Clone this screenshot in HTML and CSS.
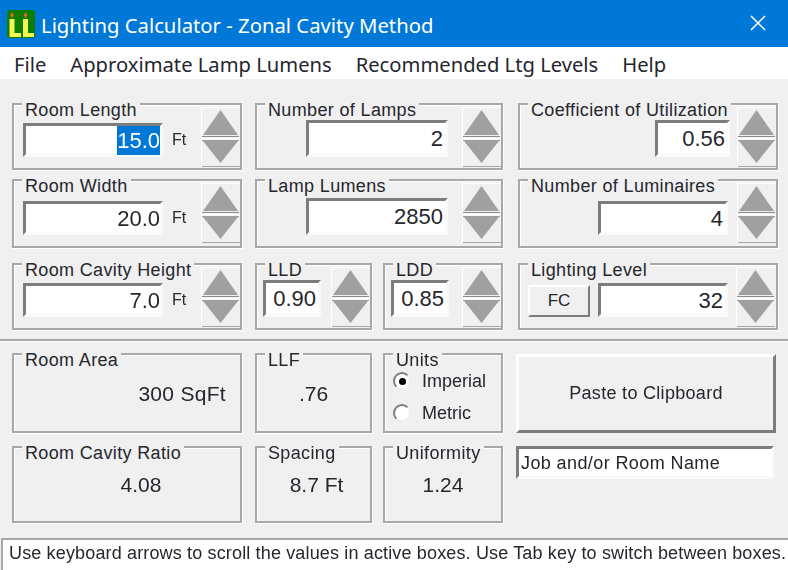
FILE: index.html
```html
<!DOCTYPE html>
<html lang="en">
<head>
  <meta charset="UTF-8">
  <title>Lighting Calculator - Zonal Cavity Method</title>
  <link rel="stylesheet" href="styles.css">
</head>
<body>

<svg class="defs" width="0" height="0">
  <symbol id="spin" viewBox="0 0 39 60">
    <path d="M19.5 3 L37 28 L2 28 Z" fill="#a0a0a0"/>
    <path d="M1 29.5 H38" stroke="#8c8c8c" stroke-width="1"/>
    <path d="M1 31.5 H38" stroke="#fff" stroke-width="1.5"/>
    <path d="M1 33.5 H38" stroke="#a0a0a0" stroke-width="1"/>
    <path d="M2 34 L37 34 L19.5 56 Z" fill="#a0a0a0"/>
  </symbol>
</svg>

<header class="titlebar">
  <svg class="app-icon" width="28" height="28" viewBox="0 0 28 28">
    <rect width="28" height="28" rx="3" fill="#0c7f00"/>
    <path d="M2.5 9 H7.5 V23 H14 V27 H2.5 Z M16 9 H21 V23 H27 V27 H16 Z" fill="#f6f650"/>
    <path d="M5 2 L6.8 5.5 L5 8 L3.2 5.5 Z M18.5 2 L20.3 5.5 L18.5 8 L16.7 5.5 Z" fill="#e8642a"/>
  </svg>
  <span class="app-title">Lighting Calculator - Zonal Cavity Method</span>
  <svg class="close-x" width="16" height="16" viewBox="0 0 16 16">
    <path d="M1 1 L15 15 M15 1 L1 15" stroke="#fff" stroke-width="1.5"/>
  </svg>
</header>

<nav class="menubar">
  <span>File</span>
  <span>Approximate Lamp Lumens</span>
  <span>Recommended Ltg Levels</span>
  <span>Help</span>
</nav>

<main class="panel">
  <section class="inputs">
    <div class="group c1 r1">
      <span class="group-label">Room Length</span>
      <div class="field w-room"><span class="selected">15.0</span></div>
      <span class="unit">Ft</span>
      <svg class="spin"><use href="#spin"/></svg>
    </div>
    <div class="group c2 r1 wide-gap">
      <span class="group-label">Number of Lamps</span>
      <div class="field w-lamps tall">2</div>
      <svg class="spin"><use href="#spin"/></svg>
    </div>
    <div class="group c4 r1 tight-gap">
      <span class="group-label">Coefficient of Utilization</span>
      <div class="field w-cu tall">0.56</div>
      <svg class="spin"><use href="#spin"/></svg>
    </div>

    <div class="group c1 r2">
      <span class="group-label">Room Width</span>
      <div class="field w-room">20.0</div>
      <span class="unit">Ft</span>
      <svg class="spin"><use href="#spin"/></svg>
    </div>
    <div class="group c2 r2 wide-gap">
      <span class="group-label">Lamp Lumens</span>
      <div class="field w-lamps tall">2850</div>
      <svg class="spin"><use href="#spin"/></svg>
    </div>
    <div class="group c4 r2">
      <span class="group-label">Number of Luminaires</span>
      <div class="field w-lum">4</div>
      <svg class="spin"><use href="#spin"/></svg>
    </div>

    <div class="group c1 r3">
      <span class="group-label">Room Cavity Height</span>
      <div class="field w-room">7.0</div>
      <span class="unit">Ft</span>
      <svg class="spin"><use href="#spin"/></svg>
    </div>
    <div class="group c2 r3 start">
      <span class="group-label">LLD</span>
      <div class="field w-factor tall">0.90</div>
      <svg class="spin"><use href="#spin"/></svg>
    </div>
    <div class="group c3 r3 start">
      <span class="group-label">LDD</span>
      <div class="field w-factor tall">0.85</div>
      <svg class="spin"><use href="#spin"/></svg>
    </div>
    <div class="group c4 r3 with-btn">
      <span class="group-label">Lighting Level</span>
      <button class="fc-btn">FC</button>
      <div class="field w-lum">32</div>
      <svg class="spin"><use href="#spin"/></svg>
    </div>
  </section>

  <hr class="divider">

  <section class="results">
    <div class="group result c1 r1">
      <span class="group-label">Room Area</span>
      <div class="value value-right">300 SqFt</div>
    </div>
    <div class="group result c2 r1">
      <span class="group-label">LLF</span>
      <div class="value">.76</div>
    </div>
    <div class="group units c3 r1">
      <span class="group-label">Units</span>
      <label class="radio-row"><span class="radio checked"></span>Imperial</label>
      <label class="radio-row"><span class="radio"></span>Metric</label>
    </div>
    <button class="paste-btn c4 r1">Paste to Clipboard</button>

    <div class="group result c1 r2">
      <span class="group-label">Room Cavity Ratio</span>
      <div class="value value-ratio">4.08</div>
    </div>
    <div class="group result c2 r2">
      <span class="group-label">Spacing</span>
      <div class="value value-spacing">8.7 Ft</div>
    </div>
    <div class="group result c3 r2">
      <span class="group-label">Uniformity</span>
      <div class="value">1.24</div>
    </div>
    <div class="job-name c4 r2">Job and/or Room Name</div>
  </section>
</main>

<footer class="statusbar">Use keyboard arrows to scroll the values in active boxes. Use Tab key to switch between boxes.</footer>

</body>
</html>
```

FILE: styles.css
```css
:root {
  --face: #f0f0f0;
  --line: #a8a8a8;
  --sunken: #7d7d7d;
  --text: #26262e;
  --font: 'Liberation Sans', Arial, sans-serif;
  --ui-font: 'Noto Sans', 'Open Sans', sans-serif;
}

html, body {
  margin: 0;
  padding: 0;
}

body {
  width: 788px;
  height: 570px;
  overflow: hidden;
  background: var(--face);
  color: var(--text);
  font-family: var(--font);
}

.defs {
  position: absolute;
}

.titlebar {
  display: flex;
  align-items: center;
  height: 47px;
  padding: 0 22px 0 7px;
  box-sizing: border-box;
  background: #0078d7;
  color: #fff;
}

.app-title {
  margin: 2px 0 0 6px;
  font-family: var(--ui-font);
  font-size: 20.3px;
}

.close-x {
  margin-left: auto;
  margin-bottom: 1px;
}

.menubar {
  display: flex;
  align-items: center;
  gap: 24px;
  height: 32px;
  box-sizing: border-box;
  padding: 1px 0 0 14px;
  background: #fff;
  font-family: var(--ui-font);
  font-size: 20.2px;
}

.panel {
  height: 459px;
  box-sizing: border-box;
  padding-top: 24px;
  filter: blur(0.45px);
}

.inputs, .results {
  display: grid;
  grid-template-columns: 230px 13px 117px 11px 120px 15px 260px;
  padding-left: 12px;
}

.inputs {
  grid-template-rows: 67px 9px 69px 15px 67px;
}

.results {
  grid-template-rows: 80px 13px 77px;
}

.c1 { grid-column: 1; }
.c2 { grid-column: 3; }
.c3 { grid-column: 5; }
.c4 { grid-column: 7; }
.r1 { grid-row: 1; }
.r2 { grid-row: 3; }
.r3 { grid-row: 5; }

.inputs .c2.r1, .inputs .c2.r2 {
  grid-column: 3 / 6;
}

.group {
  position: relative;
  display: flex;
  align-items: flex-end;
  column-gap: 9px;
  box-sizing: border-box;
  padding: 0 0 11px 9px;
  border: 2px solid var(--line);
  box-shadow: inset 1px 1px 0 #fff, 1px 1px 0 #fff;
}

.start { padding-left: 6px; }
.wide-gap { column-gap: 14px; }
.tight-gap { column-gap: 7px; }

.with-btn {
  padding-left: 8px;
  column-gap: 8px;
}

.group-label {
  position: absolute;
  top: -5px;
  left: 8px;
  padding: 0 3px;
  background: var(--face);
  font-size: 18px;
  line-height: 20px;
  letter-spacing: 0.35px;
  white-space: nowrap;
}

.field {
  box-sizing: border-box;
  height: 34px;
  padding-right: 2px;
  border: 3px solid;
  border-color: var(--sunken) #fafafa #fafafa var(--sunken);
  background: #fff;
  font-size: 22px;
  line-height: 29px;
  text-align: right;
}

.field.tall {
  height: 37px;
  line-height: 32px;
}

.selected {
  display: inline-block;
  background: #0078d7;
  color: #fff;
}

.w-room { width: 140px; padding-right: 0; }
.w-lamps { width: 142px; margin-left: auto; }
.w-cu { width: 75px; margin-left: auto; }
.w-lum { width: 130px; margin-left: auto; }
.w-factor { width: 58px; }

.with-btn .w-lum {
  margin-left: 0;
}

.unit {
  width: 20px;
  font-size: 16px;
  line-height: 34px;
}

.spin {
  flex: none;
  width: 39px;
  height: 60px;
  margin-bottom: -10px;
  margin-left: auto;
  background: var(--face);
  box-shadow: inset 1px 1px 0 #fff, inset 0 -1px 0 var(--line);
}

.r2 .spin {
  margin-bottom: -8px;
}

.w-lamps + .spin,
.w-cu + .spin,
.w-lum + .spin {
  margin-left: 0;
}

.fc-btn {
  box-sizing: border-box;
  width: 62px;
  height: 32px;
  padding: 0;
  border: 2px solid;
  border-color: #fff var(--sunken) var(--sunken) #fff;
  background: var(--face);
  color: var(--text);
  font-family: var(--font);
  font-size: 17px;
}

.divider {
  height: 2px;
  margin: 9px 0 12px;
  border: 0;
  background: var(--line);
  box-shadow: 0 1px 0 #fff;
}

.result {
  align-items: center;
  justify-content: center;
  padding: 0;
}

.value {
  font-size: 21px;
  margin-top: 1px;
}

.value-right {
  width: 100%;
  box-sizing: border-box;
  padding-right: 14px;
  text-align: right;
  letter-spacing: 0.3px;
}

.value-ratio { margin-left: 28px; }
.value-spacing { margin-left: 6px; }

.units {
  flex-direction: column;
  align-items: flex-start;
  padding: 10px 0 0 8px;
}

.radio-row {
  display: flex;
  align-items: center;
  gap: 11px;
  height: 32px;
  font-size: 18px;
}

.radio {
  display: flex;
  align-items: center;
  justify-content: center;
  box-sizing: border-box;
  width: 18px;
  height: 18px;
  border: 2px solid;
  border-color: #7d7d7d #eee #eee #7d7d7d;
  border-radius: 50%;
  background: #fff;
}

.radio.checked::after {
  content: "";
  width: 7px;
  height: 7px;
  border-radius: 50%;
  background: #000;
}

.paste-btn {
  box-sizing: border-box;
  width: 260px;
  height: 79px;
  margin: 1px 0 0 -2px;
  padding: 0;
  border: 3px solid;
  border-color: #fff var(--sunken) var(--sunken) #fff;
  background: var(--face);
  color: var(--text);
  font-family: var(--font);
  font-size: 18px;
  letter-spacing: 0.3px;
}

.job-name {
  box-sizing: border-box;
  width: 258px;
  height: 33px;
  margin-left: -2px;
  padding-left: 2px;
  border: 3px solid;
  border-color: var(--sunken) #fafafa #fafafa var(--sunken);
  background: #fff;
  font-size: 18px;
  line-height: 28px;
  letter-spacing: 0.4px;
  white-space: nowrap;
}

.statusbar {
  box-sizing: border-box;
  height: 32px;
  margin-left: 1px;
  padding-left: 6px;
  border-top: 2px solid var(--line);
  border-left: 2px solid var(--line);
  background: #fff;
  font-size: 18px;
  line-height: 27px;
  letter-spacing: 0.15px;
  white-space: nowrap;
  filter: blur(0.45px);
}
```
